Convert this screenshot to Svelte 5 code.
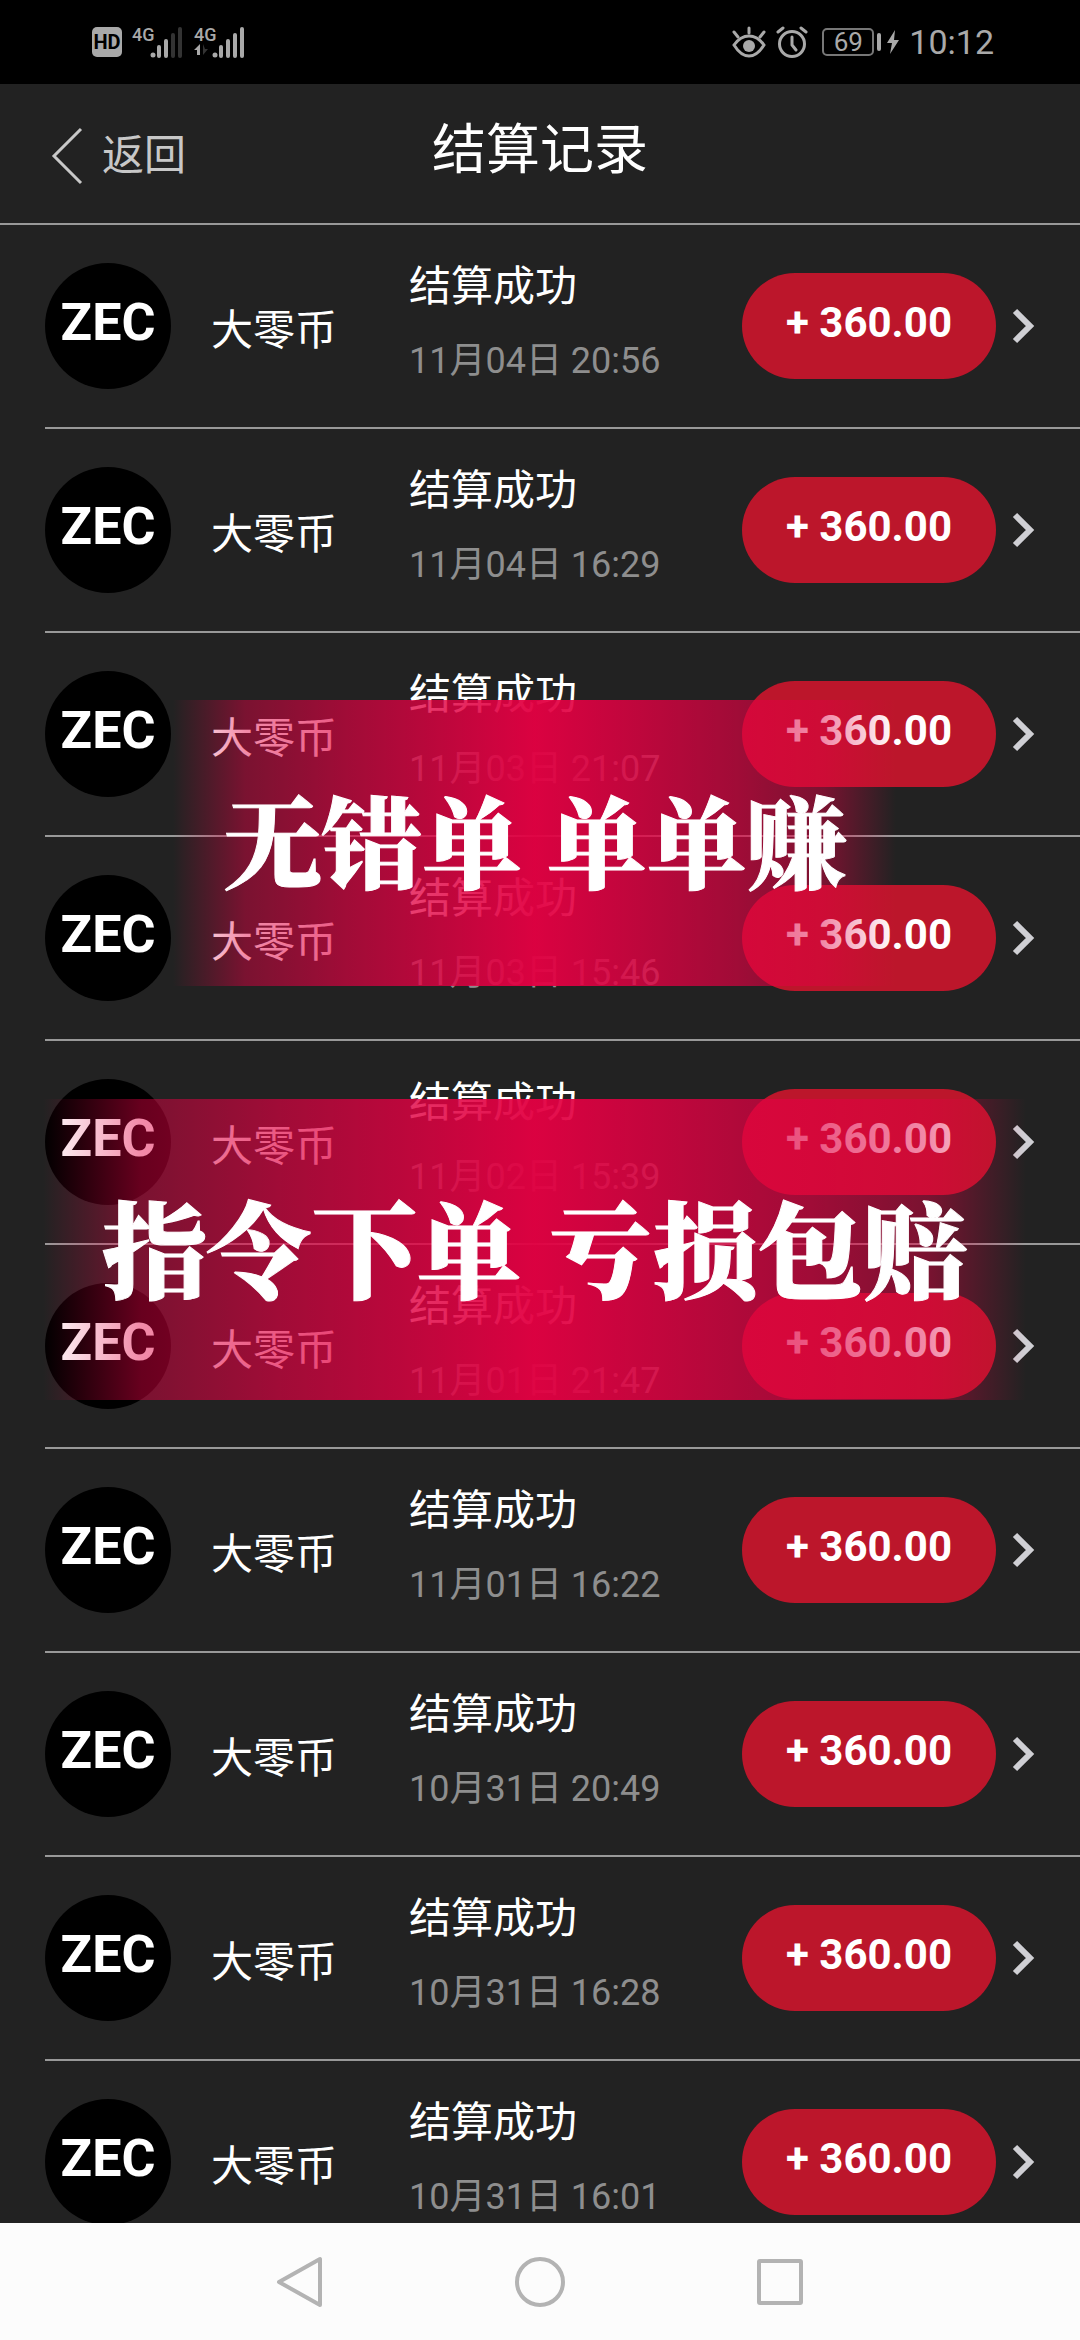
<script lang="ts">
    type Settlement = { time: string; amount: string };

    const title = '结算记录';

    const records: Settlement[] = [
        { time: '11月04日 20:56', amount: '+ 360.00' },
        { time: '11月04日 16:29', amount: '+ 360.00' },
        { time: '11月03日 21:07', amount: '+ 360.00' },
        { time: '11月03日 15:46', amount: '+ 360.00' },
        { time: '11月02日 15:39', amount: '+ 360.00' },
        { time: '11月01日 21:47', amount: '+ 360.00' },
        { time: '11月01日 16:22', amount: '+ 360.00' },
        { time: '10月31日 20:49', amount: '+ 360.00' },
        { time: '10月31日 16:28', amount: '+ 360.00' },
        { time: '10月31日 16:01', amount: '+ 360.00' }
    ];
</script>

<div class="screen">
    <div class="status">
        <div class="status-group">
            <span class="hd">HD</span>
            <span class="signal">
                <span class="net">4G</span>
                <svg width="34" height="32" viewBox="0 0 34 32" fill="#a9a9a9">
                    <circle cx="3" cy="29" r="2.5" />
                    <rect x="7" y="19" width="4" height="13" rx="2" />
                    <rect x="14" y="13" width="4" height="19" rx="2" />
                    <rect x="21" y="7" width="4" height="25" rx="2" fill="#333" />
                    <rect x="28" y="1" width="4" height="31" rx="2" fill="#333" />
                </svg>
            </span>
            <span class="signal">
                <span class="net">4G</span>
                <svg class="arrows" width="16" height="12" viewBox="0 0 16 12">
                    <path d="M6 0V11H3V6H0Z" fill="#a9a9a9" />
                    <path d="M9 0V11L14 5H11Z" fill="#333" />
                </svg>
                <svg width="34" height="32" viewBox="0 0 34 32" fill="#a9a9a9">
                    <circle cx="3" cy="29" r="2.5" />
                    <rect x="7" y="19" width="4" height="13" rx="2" />
                    <rect x="14" y="13" width="4" height="19" rx="2" />
                    <rect x="21" y="7" width="4" height="25" rx="2" />
                    <rect x="28" y="1" width="4" height="31" rx="2" />
                </svg>
            </span>
        </div>
        <div class="status-group">
            <svg width="34" height="32" viewBox="0 0 34 32" fill="none" stroke="#a9a9a9" stroke-width="3" stroke-linecap="round">
                <path d="M2 19C7 12 12 10 17 10S27 12 32 19C27 27 22 30 17 30S7 27 2 19Z" />
                <path d="M17 2V7M2 6L6 11M32 6L28 11" />
                <circle cx="17" cy="20" r="6" fill="#a9a9a9" stroke="none" />
            </svg>
            <svg width="32" height="32" viewBox="0 0 32 32" fill="none" stroke="#a9a9a9" stroke-width="3" stroke-linecap="round">
                <circle cx="16" cy="18" r="12.5" />
                <path d="M16 11V19L20 24M2 6L7 2M30 6L25 2" />
            </svg>
            <span class="battery"><span class="level">69</span></span>
            <svg class="bolt" width="12" height="24" viewBox="0 0 12 24" fill="#a9a9a9">
                <path d="M8 0L0 13H5L3 24L12 10H7Z" />
            </svg>
            <span class="clock">10:12</span>
        </div>
    </div>

    <header>
        <button class="back" type="button">
            <svg width="32" height="58" viewBox="0 0 32 58" fill="none" stroke="#c8c8c8" stroke-width="3">
                <path d="M30 2L3 29L30 56" />
            </svg>
            返回
        </button>
        <h1>{title}</h1>
    </header>

    <main>
        <ul>
            {#each records as record}
                <li>
                    <a class="row" href="#detail">
                        <span class="coin">ZEC</span>
                        <span class="name">大零币</span>
                        <span class="info">
                            <span class="state">结算成功</span>
                            <time>{record.time}</time>
                        </span>
                        <span class="amount">{record.amount}</span>
                        <svg width="24" height="36" viewBox="0 0 24 36" fill="none" stroke="#cfcfd4" stroke-width="6">
                            <path d="M3 3L18 18L3 33" />
                        </svg>
                    </a>
                </li>
            {/each}
        </ul>
        <p class="banner first">无错单 单单赚</p>
        <p class="banner second">指令下单 亏损包赔</p>
    </main>

    <nav>
        <button type="button" aria-label="返回">
            <svg width="52" height="52" viewBox="0 0 52 52">
                <path d="M46 3V49L5 26Z" />
            </svg>
        </button>
        <button type="button" aria-label="主页">
            <svg width="52" height="52" viewBox="0 0 52 52">
                <circle cx="26" cy="26" r="23" />
            </svg>
        </button>
        <button type="button" aria-label="最近任务">
            <svg width="52" height="52" viewBox="0 0 52 52">
                <rect x="5" y="5" width="42" height="42" rx="1" />
            </svg>
        </button>
    </nav>
</div>

<style>
    :global(body) {
        background: #222;
    }

    .screen {
        display: flex;
        flex-direction: column;
        height: 100vh;
        background: #222;
        color: #fff;
        font-family: Roboto, 'Noto Sans CJK SC', sans-serif;
    }

    svg {
        display: block;
        flex: none;
    }

    button {
        background: none;
        border: 0;
        padding: 0;
        color: inherit;
        font: inherit;
    }

    .status {
        display: flex;
        flex: none;
        align-items: center;
        justify-content: space-between;
        height: 84px;
        padding: 0 86px 0 92px;
        background: #000;
        color: #a9a9a9;
    }

    .status-group {
        display: flex;
        align-items: center;
        gap: 10px;
    }

    .hd {
        width: 30px;
        border-radius: 5px;
        background: #a9a9a9;
        color: #000;
        font-size: 20px;
        font-weight: 700;
        line-height: 30px;
        text-align: center;
    }

    .signal {
        display: grid;
        grid-template-columns: 18px 34px;
        grid-template-rows: 18px 14px;
    }

    .signal svg:last-child {
        grid-column: 2;
        grid-row: 1 / 3;
    }

    .arrows {
        grid-column: 1;
        grid-row: 2;
    }

    .net {
        font-size: 18px;
        font-weight: 500;
        line-height: 18px;
    }

    .battery {
        display: flex;
        align-items: center;
        gap: 3px;
        margin-left: 4px;
    }

    .battery::after {
        content: '';
        width: 4px;
        height: 18px;
        border-radius: 2px;
        background: #a9a9a9;
    }

    .level {
        width: 48px;
        border: 2px solid #777;
        border-radius: 5px;
        font-size: 26px;
        line-height: 24px;
        text-align: center;
    }

    .bolt {
        margin-left: -4px;
    }

    .clock {
        font-size: 34px;
        line-height: 40px;
    }

    header {
        display: grid;
        flex: none;
        grid-template-columns: 1fr auto 1fr;
        align-items: center;
        height: 139px;
        padding: 0 51px;
        border-bottom: 2px solid #999;
    }

    .back {
        display: flex;
        align-items: center;
        gap: 19px;
        margin-top: 4px;
        color: #c8c8c8;
        font-size: 42px;
        line-height: 60px;
    }

    h1 {
        margin: 0 0 6px;
        font-size: 54px;
        font-weight: 400;
        line-height: 72px;
    }

    main {
        position: relative;
        flex: 1;
        min-height: 0;
        overflow-y: auto;
        scrollbar-width: none;
    }

    ul {
        margin: 0;
        padding: 0 0 0 45px;
        list-style: none;
    }

    li {
        border-bottom: 2px solid #999;
    }

    .row {
        display: grid;
        grid-template-columns: 126px 198px 1fr 254px 40px;
        align-items: center;
        height: 202px;
        padding-right: 44px;
        color: inherit;
        text-decoration: none;
    }

    .coin {
        height: 126px;
        border-radius: 50%;
        background: #000;
        font-size: 52px;
        font-weight: 700;
        line-height: 120px;
        text-align: center;
    }

    .name {
        padding: 10px 0 0 40px;
        font-size: 42px;
        line-height: 56px;
    }

    .info {
        display: flex;
        flex-direction: column;
        gap: 24px;
        padding: 0 0 4px 40px;
    }

    .state {
        font-size: 42px;
        line-height: 50px;
    }

    time {
        color: #8e8e8e;
        font-size: 36px;
        line-height: 50px;
    }

    .amount {
        height: 106px;
        border-radius: 53px;
        background: #bc162b;
        font-size: 42px;
        font-weight: 700;
        line-height: 100px;
        text-align: center;
    }

    .row svg {
        margin-left: 16px;
    }

    .banner {
        position: absolute;
        display: flex;
        box-sizing: border-box;
        align-items: center;
        justify-content: center;
        margin: 0;
        padding-bottom: 10px;
        font-family: 'Noto Serif CJK SC', 'Noto Sans CJK SC', serif;
        font-weight: 900;
        line-height: 1;
        white-space: nowrap;
        -webkit-text-stroke: 1px #fff;
        background: linear-gradient(
            90deg,
            rgba(226, 0, 66, 0) 0%,
            rgba(226, 0, 66, 0.46) 10%,
            rgba(226, 0, 66, 0.66) 24%,
            rgba(226, 0, 66, 0.84) 40%,
            rgba(226, 0, 66, 0.96) 50%,
            rgba(226, 0, 66, 0.84) 62%,
            rgba(226, 0, 66, 0.66) 78%,
            rgba(226, 0, 66, 0.46) 90%,
            rgba(226, 0, 66, 0) 100%
        );
    }

    .first {
        top: 475px;
        left: 16%;
        right: 17%;
        height: 286px;
        font-size: 100px;
    }

    .second {
        top: 874px;
        left: 4%;
        right: 5%;
        height: 301px;
        font-size: 105px;
    }

    nav {
        display: flex;
        flex: none;
        justify-content: center;
        height: 117px;
        background: #fcfcfc;
    }

    nav button {
        display: flex;
        align-items: center;
        justify-content: center;
        width: calc(100% * 2 / 9);
    }

    nav svg {
        fill: none;
        stroke: #b3b3b3;
        stroke-width: 4;
        stroke-linejoin: round;
    }
</style>
